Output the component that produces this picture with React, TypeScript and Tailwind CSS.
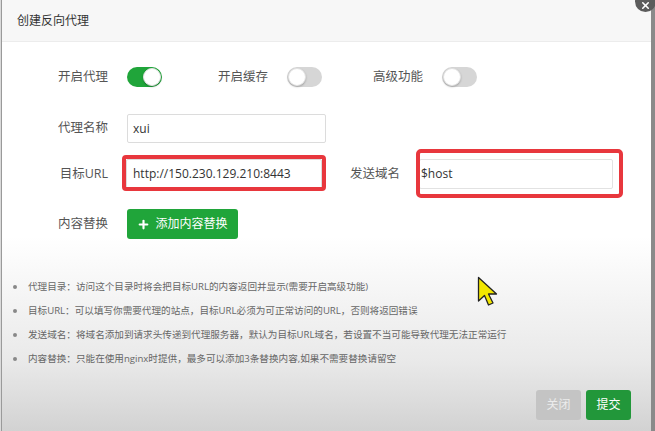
import { Plus, X } from "lucide-react";

const font = { fontFamily: '"Open Sans", "Noto Sans CJK SC", sans-serif' };

function Toggle({ on }: { on?: boolean }) {
  return (
    <div
      className={
        on
          ? "ml-[19px] flex h-[20px] w-[35px] items-center justify-end rounded-full bg-[#20a53a] px-[1px]"
          : "ml-[19px] flex h-[20px] w-[35px] items-center justify-start rounded-full bg-[#d6d6d6] px-[1px]"
      }
    >
      <div className="h-[18px] w-[18px] rounded-full border border-[#e2e2e2] bg-white shadow-[0_1px_2px_rgba(0,0,0,0.25)]" />
    </div>
  );
}

const tips = [
  "代理目录：访问这个目录时将会把目标URL的内容返回并显示(需要开启高级功能)",
  "目标URL：可以填写你需要代理的站点，目标URL必须为可正常访问的URL，否则将返回错误",
  "发送域名：将域名添加到请求头传递到代理服务器，默认为目标URL域名，若设置不当可能导致代理无法正常运行",
  "内容替换：只能在使用nginx时提供，最多可以添加3条替换内容,如果不需要替换请留空",
];

export default function App() {
  return (
    <div
      className="relative flex h-[431px] w-[655px] overflow-hidden bg-[#8a8a8a]"
      style={font}
    >
      <div className="w-[2px] shrink-0 border-r border-[#9a9a9a] bg-[#dadada]" />

      <div className="flex w-[649px] shrink-0 flex-col bg-[linear-gradient(to_bottom,#ffffff_0%,#ffffff_55%,#e9e9e9_84%,#d2d2d2_100%)]">
        <div className="flex h-[42px] shrink-0 items-center border-b border-[#ececec] bg-[#f7f7f7] pl-[15px] text-[12px] text-[#333]">
          创建反向代理
        </div>

        <div className="flex flex-col text-[12.5px] text-[#555]">
          <div className="mt-[20px] flex h-[30px] items-center">
            <span className="w-[106px] text-right">开启代理</span>
            <Toggle on />
            <span className="w-[106px] text-right">开启缓存</span>
            <Toggle />
            <span className="w-[101px] text-right">高级功能</span>
            <Toggle />
          </div>

          <div className="mt-[22px] flex items-center">
            <span className="w-[106px] text-right">代理名称</span>
            <div className="ml-[19px] flex h-[29px] w-[199px] items-center rounded-[2px] border border-[#dcdcdc] bg-white pl-[5px] text-[12px] text-[#333]">
              xui
            </div>
          </div>

          <div className="mt-[16px] flex items-center">
            <span className="w-[106px] text-right">目标URL</span>
            <div className="relative ml-[18px] flex h-[30px] w-[196px] items-center rounded-[2px] border border-[#dcdcdc] bg-white pl-[6px] text-[12px] text-[#333]">
              http://150.230.129.210:8443
              <span className="absolute -left-[5px] -top-[5px] h-[36px] w-[204px] rounded-[4px] border-[4px] border-[#e8373d]" />
            </div>
            <span className="w-[78px] text-right">发送域名</span>
            <div className="relative ml-[19px] flex h-[30px] w-[194px] items-center rounded-[2px] border border-[#e2e2e2] bg-white pl-[1px] text-[12px] text-[#333]">
              $host
              <span className="absolute -left-[4px] -top-[11px] h-[49px] w-[207px] rounded-[5px] border-[4px] border-[#e8373d]" />
            </div>
          </div>

          <div className="mt-[20px] flex items-center">
            <span className="w-[106px] text-right">内容替换</span>
            <button className="ml-[19px] flex h-[30px] w-[111px] items-center justify-center gap-[5px] rounded-[3px] bg-[#20a53a] text-[12px] text-white">
              <Plus size={13} strokeWidth={4} />
              添加内容替换
            </button>
          </div>

          <ul className="mt-[36px] text-[9.6px] leading-[24px] text-[#666]">
            {tips.map((t) => (
              <li key={t} className="flex items-center">
                <span className="ml-[11px] mr-[11px] h-[4px] w-[4px] rounded-full bg-[#888]" />
                {t}
              </li>
            ))}
          </ul>
        </div>

        <div className="mt-[10px] flex flex-1 items-start justify-end gap-[5px] border-t border-[#e2e2e2] pr-[20px] pt-[8px]">
          <button className="flex h-[30px] w-[45px] items-center justify-center rounded-[3px] bg-[#c4c4c4] text-[12px] text-[#ececec]">
            关闭
          </button>
          <button className="flex h-[30px] w-[45px] items-center justify-center rounded-[3px] bg-[#22973a] text-[12px] text-white">
            提交
          </button>
        </div>
      </div>

      <div className="absolute left-[635px] top-[-9px] flex h-[21px] w-[21px] items-center justify-center rounded-full bg-[#5c5c5c] pt-[7px] text-white">
        <X size={11} strokeWidth={3.5} />
      </div>

      <svg
        className="absolute left-[477px] top-[276px]"
        width="26"
        height="32"
        viewBox="0 0 26 32"
      >
        <polygon
          points="1.5,1.5 1.5,25 7.5,19.5 11.5,29 16,27 11.5,18 19.5,18"
          fill="#f2e600"
          stroke="#222"
          strokeWidth="1.3"
          strokeLinejoin="round"
        />
      </svg>
    </div>
  );
}
